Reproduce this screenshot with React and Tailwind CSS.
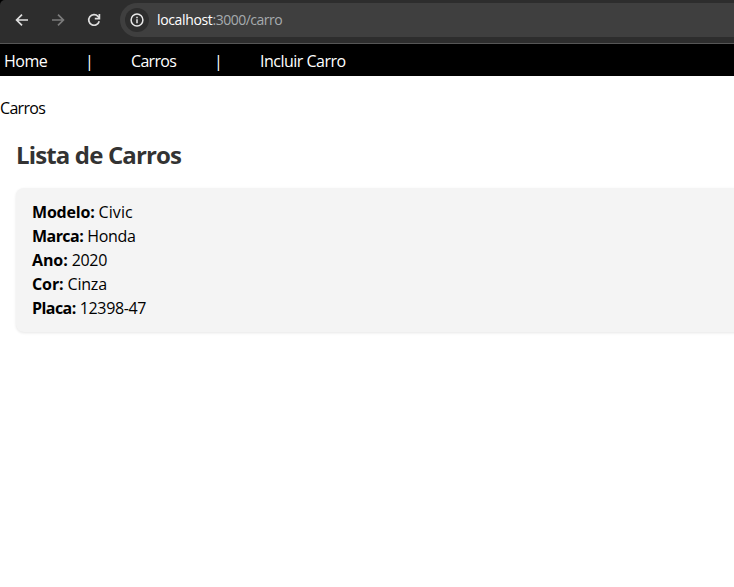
const details = [
  { label: "Modelo:", value: "Civic", labelClass: "tracking-[-0.2px]", valueClass: "tracking-[0.1px]" },
  { label: "Marca:", value: "Honda", labelClass: "tracking-[-0.55px]", valueClass: "tracking-[-0.3px]" },
  { label: "Ano:", value: "2020", labelClass: "tracking-[-0.1px]", valueClass: "tracking-[-0.3px]" },
  { label: "Cor:", value: "Cinza", labelClass: "tracking-[-0.1px]", valueClass: "tracking-[-0.2px]" },
  { label: "Placa:", value: "12398-47", labelClass: "tracking-[-0.55px]", valueClass: "tracking-[-0.35px]" },
];

function BrowserBar() {
  return (
    <div className="bg-black">
      <header className="flex h-11 items-start rounded-tl-[5px] border-b border-[#565656] bg-[#2d2d2d] pt-[3px]">
        <div className="flex h-[34px] w-[120px] shrink-0 items-center">
          <svg className="ml-[15px] size-[14px]" viewBox="0 0 14 14" fill="none" stroke="#dedede" strokeWidth="1.7">
            <path d="M13 7H2M7 1.6 1.6 7 7 12.4" />
          </svg>
          <svg className="ml-[22px] size-[14px]" viewBox="0 0 14 14" fill="none" stroke="#7b7b7b" strokeWidth="1.7">
            <path d="M1 7h11M7 1.6 12.4 7 7 12.4" />
          </svg>
          <svg className="ml-[22px] size-[14px]" viewBox="0 0 14 14" fill="none" stroke="#dedede" strokeWidth="1.7">
            <path d="M12.2 8.2A5.3 5.3 0 1 1 11 3.4L12.4 5" />
            <path d="M12.4 1v4.6H7.8" />
          </svg>
        </div>
        <div className="flex h-[34px] flex-1 items-center rounded-l-full bg-[#3f3f3f] pl-[5px]">
          <span className="flex size-6 items-center justify-center rounded-full bg-[#2d2d2d]">
            <svg className="size-[14px]" viewBox="0 0 14 14" fill="none" stroke="#e8e8e8" strokeWidth="1.5">
              <circle cx="7" cy="7" r="5.9" />
              <path d="M7 6.3V10.2M7 3.7V5.2" />
            </svg>
          </span>
          <span className="ml-2 text-[14px] leading-5 whitespace-nowrap text-[#a6abae]">
            <span className="tracking-[-0.35px] text-white">localhost</span>
            <span className="tracking-[-0.5px]">:3000/carro</span>
          </span>
        </div>
      </header>
    </div>
  );
}

export default function App() {
  return (
    <div className="h-[587px] overflow-hidden bg-white font-['Open_Sans','Noto_Sans',sans-serif] text-[16px] leading-6 text-black">
      <BrowserBar />
      <nav className="flex h-8 items-center bg-black pt-px pl-1 whitespace-nowrap text-white">
        <a className="w-[81px] tracking-[-0.5px]">Home</a>
        <span className="w-[46px]">|</span>
        <a className="w-[83px] tracking-[-0.7px]">Carros</a>
        <span className="w-[46px]">|</span>
        <a className="tracking-[-0.5px]">Incluir Carro</a>
      </nav>
      <p className="mt-5 tracking-[-0.7px]">Carros</p>
      <main className="pt-[17px] pl-4">
        <h1 className="mb-[15px] text-[24px] leading-9 font-bold tracking-[-0.85px] text-[#333333]">Lista de Carros</h1>
        <ul className="w-[760px] rounded-lg bg-[#f4f4f4] px-4 py-3 shadow-[0_1px_3px_rgba(0,0,0,0.1)]">
          {details.map((item) => (
            <li key={item.label} className="flex h-6 gap-1 whitespace-nowrap">
              <strong className={item.labelClass}>{item.label}</strong>
              <span className={`font-medium ${item.valueClass}`}>{item.value}</span>
            </li>
          ))}
        </ul>
      </main>
    </div>
  );
}
